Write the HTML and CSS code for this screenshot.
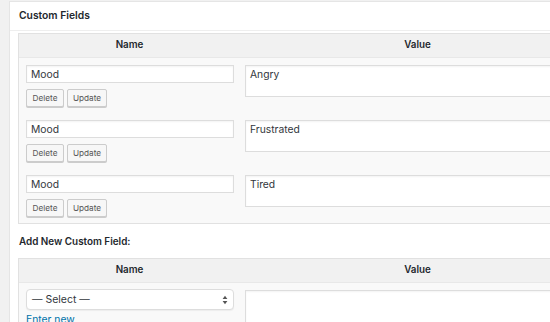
FILE: index.html
```html
<!DOCTYPE html>
<html>
<head>
<meta charset="utf-8">
<link rel="stylesheet" href="styles.css">
</head>
<body>
<div class="postbox">
  <h2 class="hndle">Custom Fields</h2>
  <div class="inside">
    <div class="cf-table">
      <div class="cf-head">
        <div class="th name-col">Name</div>
        <div class="th value-col">Value</div>
      </div>
      <div class="cf-row">
        <div class="name-col cell">
          <div class="text-input">Mood</div>
          <div class="btns"><span class="btn del">Delete</span><span class="btn upd">Update</span></div>
        </div>
        <div class="value-col cell"><div class="textarea">Angry</div></div>
      </div>
      <div class="cf-row">
        <div class="name-col cell">
          <div class="text-input">Mood</div>
          <div class="btns"><span class="btn del">Delete</span><span class="btn upd">Update</span></div>
        </div>
        <div class="value-col cell"><div class="textarea">Frustrated</div></div>
      </div>
      <div class="cf-row">
        <div class="name-col cell">
          <div class="text-input">Mood</div>
          <div class="btns"><span class="btn del">Delete</span><span class="btn upd">Update</span></div>
        </div>
        <div class="value-col cell"><div class="textarea">Tired</div></div>
      </div>
    </div>
    <p class="add-title">Add New Custom Field:</p>
    <div class="cf-table">
      <div class="cf-head">
        <div class="th name-col">Name</div>
        <div class="th value-col">Value</div>
      </div>
      <div class="cf-row new-row">
        <div class="name-col cell">
          <div class="select"><span>— Select —</span>
            <svg class="arrows" width="6" height="10" viewBox="0 0 6 10"><path d="M3 0.8 L5.4 4 H0.6 Z M3 9.2 L5.4 6 H0.6 Z" fill="#555"/></svg>
          </div>
          <a class="enter-new">Enter new</a>
        </div>
        <div class="value-col cell"><div class="textarea new"></div></div>
      </div>
    </div>
  </div>
</div>
</body>
</html>
```

FILE: styles.css
```css
html, body {
  margin: 0;
  padding: 0;
  background: #f1f1f1;
  overflow: hidden;
  width: 550px;
  height: 322px;
}
body {
  font-family: Inter, "Liberation Sans", Arial, sans-serif;
  color: #23282d;
  font-size: 10px;
}
.postbox {
  margin: 1px 0 0 9px;
  width: 620px;
  background: #fff;
  border: 1px solid #e5e5e5;
  border-right: none;
}
.hndle {
  margin: 0;
  height: 28px;
  line-height: 27px;
  padding: 0 9px;
  font-size: 10.3px;
  font-weight: 600;
  border-bottom: 1px solid #eee;
}
.inside {
  padding: 2px 0 0 8px;
}
.cf-table {
  width: 576px;
  border: 1px solid #e1e1e1;
  background: #f9f9f9;
}
.cf-head {
  display: flex;
  height: 23px;
  background: #f1f1f1;
  border-bottom: 1px solid #e8e8e8;
}
.th {
  font-weight: 600;
  font-size: 9.8px;
  line-height: 22px;
  text-align: center;
}
.name-col { width: 221px; }
.value-col { flex: 1; }
.cf-row {
  display: flex;
}
.cell {
  padding: 7px 0 6px 0;
}
.cf-row .name-col {
  padding-left: 7px;
  width: 214px;
}
.cf-row .value-col {
  padding-left: 5px;
}
.text-input {
  box-sizing: border-box;
  width: 208px;
  height: 18px;
  border: 1px solid #ddd;
  background: #fff;
  box-shadow: inset 0 1px 2px rgba(0,0,0,0.05);
  font-size: 10.3px;
  line-height: 16px;
  padding-left: 4px;
  color: #32373c;
}
.btns {
  display: flex;
  gap: 3px;
  margin-top: 6px;
}
.btn {
  box-sizing: border-box;
  height: 18px;
  border: 1px solid #ccc;
  border-radius: 2px;
  background: #f7f7f7;
  box-shadow: 0 1px 0 #ccc;
  font-size: 8.2px;
  line-height: 16px;
  color: #555;
  text-align: center;
}
.btn.del { width: 38px; }
.btn.upd { width: 40px; }
.textarea {
  box-sizing: border-box;
  height: 32px;
  border: 1px solid #ddd;
  background: #fff;
  box-shadow: inset 0 1px 2px rgba(0,0,0,0.05);
  font-size: 10.3px;
  line-height: 16px;
  padding: 0 4px;
  color: #32373c;
}
.add-title {
  margin: 0;
  height: 34px;
  line-height: 34px;
  padding-left: 1px;
  font-weight: 600;
  font-size: 9.9px;
}
.new-row .cell { padding-top: 6px; }
.select {
  box-sizing: border-box;
  width: 208px;
  height: 21px;
  border: 1px solid #ddd;
  border-radius: 4px;
  background: #fff;
  box-shadow: 0 1px 1px rgba(0,0,0,0.05);
  display: flex;
  align-items: center;
  justify-content: space-between;
  padding: 0 5px 0 5px;
  font-size: 10.5px;
  color: #32373c;
}
.arrows { display: block; }
.enter-new {
  display: block;
  margin-top: 3px;
  color: #0073aa;
  font-size: 10.3px;
}
.textarea.new { margin-top: 1px; height: 34px; }
```
